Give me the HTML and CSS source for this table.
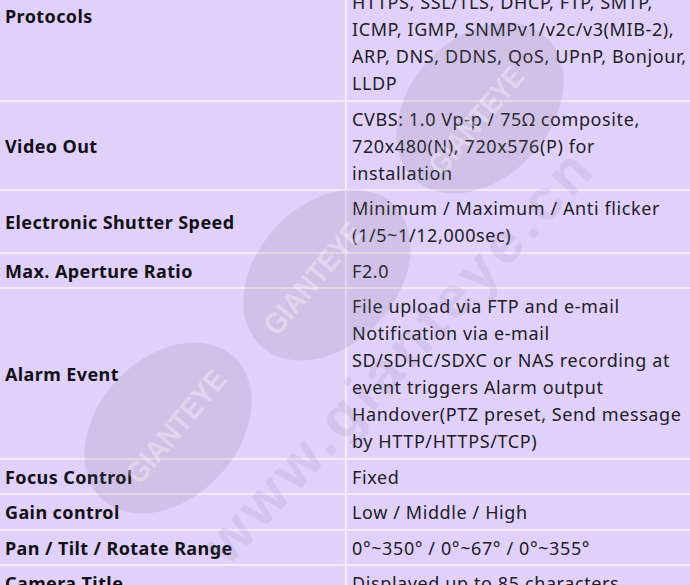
FILE: index.html
```html
<!DOCTYPE html>
<html lang="en">
<head>
<meta charset="utf-8">
<title>Specifications</title>
<link rel="stylesheet" href="styles.css">
</head>
<body>
<div class="sheet">
  <table class="spec">
    <tbody>
      <tr class="r6">
        <th>Protocols</th>
        <td>IPv4, IPv6, TCP/IP, UDP/IP, RTP(UDP),<br>RTP(TCP), RTCP, RTSP, NTP, HTTP,<br>HTTPS, SSL/TLS, DHCP, FTP, SMTP,<br>ICMP, IGMP, SNMPv1/v2c/v3(MIB-2),<br>ARP, DNS, DDNS, QoS, UPnP, Bonjour,<br>LLDP</td>
      </tr>
      <tr>
        <th>Video Out</th>
        <td>CVBS: 1.0 Vp-p / 75Ω composite,<br>720x480(N), 720x576(P) for<br>installation</td>
      </tr>
      <tr>
        <th>Electronic Shutter Speed</th>
        <td>Minimum / Maximum / Anti flicker<br>(1/5~1/12,000sec)</td>
      </tr>
      <tr>
        <th>Max. Aperture Ratio</th>
        <td>F2.0</td>
      </tr>
      <tr>
        <th>Alarm Event</th>
        <td>File upload via FTP and e-mail<br>Notification via e-mail<br>SD/SDHC/SDXC or NAS recording at<br>event triggers Alarm output<br>Handover(PTZ preset, Send message<br>by HTTP/HTTPS/TCP)</td>
      </tr>
      <tr>
        <th>Focus Control</th>
        <td>Fixed</td>
      </tr>
      <tr>
        <th>Gain control</th>
        <td>Low / Middle / High</td>
      </tr>
      <tr>
        <th>Pan / Tilt / Rotate Range</th>
        <td>0°~350° / 0°~67° / 0°~355°</td>
      </tr>
      <tr>
        <th>Camera Title</th>
        <td>Displayed up to 85 characters</td>
      </tr>
    </tbody>
  </table>
  <svg class="watermark" width="690" height="585" viewBox="0 0 690 585" aria-hidden="true">
    <g class="oval">
      <ellipse cx="480" cy="108" rx="97" ry="70" transform="rotate(-47 480 108)"/>
      <ellipse cx="327" cy="275" rx="97" ry="70" transform="rotate(-47 327 275)"/>
      <ellipse cx="168" cy="428" rx="97" ry="70" transform="rotate(-47 168 428)"/>
    </g>
    <g class="brand">
      <text x="478" y="122" textLength="130" lengthAdjust="spacingAndGlyphs" transform="rotate(-50 478 122)">GIANTEYE</text>
      <text x="315" y="280" textLength="136" lengthAdjust="spacingAndGlyphs" transform="rotate(-50 315 280)">GIANTEYE</text>
      <text x="178" y="428" textLength="138" lengthAdjust="spacingAndGlyphs" transform="rotate(-50 178 428)">GIANTEYE</text>
    </g>
    <text class="site" x="402" y="358" transform="rotate(-47 402 358)">www.gianteye.cn</text>
  </svg>
</div>
</body>
</html>
```

FILE: styles.css
```css
html, body {
  margin: 0;
  padding: 0;
  background: #e0d1fa;
}

body {
  width: 690px;
  height: 585px;
  overflow: hidden;
}

.sheet {
  position: relative;
  width: 690px;
  height: 585px;
  overflow: hidden;
}

.spec {
  width: 690px;
  margin-top: -69px;
  border-collapse: collapse;
  table-layout: fixed;
  background: #e0d1fa;
  font-family: "Noto Sans", "Open Sans", sans-serif;
  font-size: 18px;
  line-height: 27px;
}

.spec th,
.spec td {
  border: 2px solid #f2ecfd;
  padding: 4px 5px 2.5px;
  vertical-align: middle;
  white-space: nowrap;
}

.spec tr:first-child th,
.spec tr:first-child td {
  border-top: none;
}

.spec th {
  border-left: none;
}

.spec td {
  border-right: none;
}

.spec th {
  width: 335px;
  text-align: left;
  font-weight: 700;
  letter-spacing: 0.4px;
  color: #141018;
}

.spec td {
  letter-spacing: 0.6px;
  color: #222026;
}

.watermark {
  position: absolute;
  left: 0;
  top: 0;
  pointer-events: none;
}

.oval ellipse {
  fill: rgba(120, 115, 130, 0.15);
}

.brand text {
  font-family: "Liberation Sans", "DejaVu Sans", sans-serif;
  font-weight: 700;
  font-size: 30px;
  fill: rgba(255, 255, 255, 0.32);
  text-anchor: middle;
  dominant-baseline: middle;
}

.site {
  font-family: "Liberation Sans", sans-serif;
  font-weight: 700;
  font-size: 58px;
  letter-spacing: 5px;
  fill: rgba(120, 110, 135, 0.12);
  text-anchor: middle;
  dominant-baseline: middle;
}
```
